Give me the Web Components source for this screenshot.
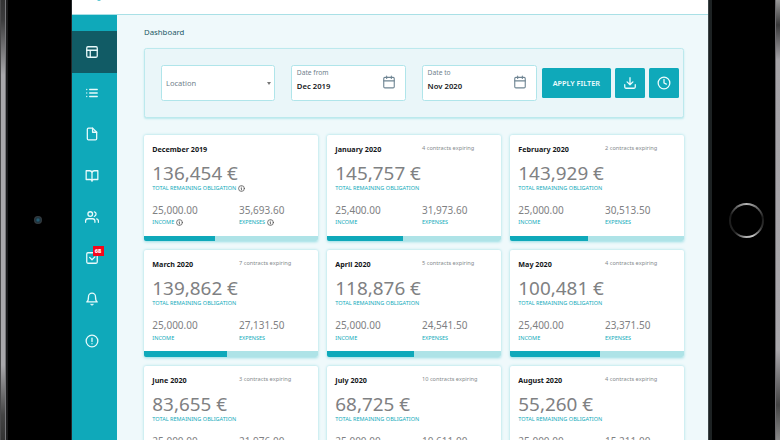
<!DOCTYPE html>
<html lang="en">
<head>
<meta charset="utf-8">
<title>Dashboard</title>
<style>
	body {
		margin: 0;
		width: 780px;
		height: 440px;
		overflow: hidden;
		background: #000;
		font-family: "Noto Sans", "Open Sans", sans-serif;
	}
</style>
</head>
<body>
<tablet-frame>
	<app-shell>
		<side-nav slot="nav"></side-nav>
		<filter-panel></filter-panel>
		<card-grid></card-grid>
	</app-shell>
</tablet-frame>

<script>
// stroke icons on a 24x24 grid
const ICONS = {
	layout: '<rect x="3" y="3" width="18" height="18" rx="2"/><path d="M3 9h18M9 21V9"/>',
	list: '<path d="M8 6h13M8 12h13M8 18h13M3 6h.01M3 12h.01M3 18h.01"/>',
	file: '<path d="M13 2H6a2 2 0 0 0-2 2v16a2 2 0 0 0 2 2h12a2 2 0 0 0 2-2V9z"/><path d="M13 2v7h7"/>',
	book: '<path d="M2 3h6a4 4 0 0 1 4 4v14a3 3 0 0 0-3-3H2zM22 3h-6a4 4 0 0 0-4 4v14a3 3 0 0 1 3-3h7z"/>',
	users: '<path d="M17 21v-2a4 4 0 0 0-4-4H5a4 4 0 0 0-4 4v2"/><circle cx="9" cy="7" r="4"/><path d="M23 21v-2a4 4 0 0 0-3-3.87M16 3.13a4 4 0 0 1 0 7.75"/>',
	check: '<path d="M8 11l4 4 5-5"/><rect x="3" y="3" width="18" height="18" rx="2"/>',
	bell: '<path d="M18 8A6 6 0 0 0 6 8c0 7-3 9-3 9h18s-3-2-3-9M13.73 21a2 2 0 0 1-3.46 0"/>',
	alert: '<circle cx="12" cy="12" r="10"/><path d="M12 7v6M12 16.5h.01"/>',
	calendar: '<rect x="3" y="4" width="18" height="18" rx="2"/><path d="M16 2v4M8 2v4M3 10h18"/>',
	download: '<path d="M21 15v4a2 2 0 0 1-2 2H5a2 2 0 0 1-2-2v-4M7 10l5 5 5-5M12 15V3"/>',
	clock: '<circle cx="12" cy="12" r="10"/><path d="M12 6v6l4 2"/>',
	info: '<circle cx="12" cy="12" r="10"/><path d="M12 17v-6h-1.5M12 7h.01"/>'
};

class LineIcon extends HTMLElement {
	constructor() {
		super();
		this.attachShadow({ mode: 'open' });
	}

	connectedCallback() {
		this.shadowRoot.innerHTML = `
		<style>
			:host { display: block; flex: none; width: var(--icon-size, 14px); height: var(--icon-size, 14px); }
			svg { display: block; width: 100%; height: 100%; fill: none; stroke: currentColor;
				stroke-width: var(--icon-stroke, 2.2); stroke-linecap: round; stroke-linejoin: round; }
		</style>
		<svg viewBox="0 0 24 24">${ICONS[this.getAttribute('name')]}</svg>`;
	}
}

class TabletFrame extends HTMLElement {
	constructor() {
		super();
		const shadowRoot = this.attachShadow({ mode: 'open' });
		shadowRoot.innerHTML = `
		<style>
			:host { display: grid; grid-template-columns: 72px 636px 72px; height: 440px; background: #000; }
			.bezel { display: flex; align-items: center; background: #000; }
			.left { box-sizing: border-box; border-right: 1px solid #24282a; }
			.right { box-sizing: border-box; border-left: 1px solid #3c4547; box-shadow: inset 3px 0 #1d2223; }
			.edge { height: 440px; flex: none; }
			.left .edge { width: 8px; background:
				linear-gradient(90deg, #4a4a4b 0 1px, transparent 1px 5px, #77777a 5px 6px, #1a1a1b 6px),
				linear-gradient(#333 0, #3c3c3d 20px, #a9a8ab 75px, #a9a8ab 365px, #444 415px, #333); }
			.right .edge { width: 5px; margin-left: auto; background:
				linear-gradient(90deg, #6c6a6e 0 1px, transparent 1px),
				linear-gradient(#999 0, #39393a 25px, #a5a3a7 60px, #a9a7ab 350px, #444 405px, #888); }
			.camera { width: 8px; height: 8px; margin-left: 26px; border-radius: 50%;
				background: radial-gradient(circle, #245d75 0 15%, #1e333d 40%, #3b3d40 75%); }
			.home { width: 35px; height: 35px; margin-left: 20px; margin-top: 1px; border-radius: 50%; padding: 2px; box-sizing: border-box;
				background: conic-gradient(#b5b5b5, #777 35deg, #1b1b1b 80deg, #333 115deg, #ccc 160deg, #aaa 185deg, #222 225deg, #1b1b1b 290deg, #777 330deg, #b5b5b5); }
			.home i { display: block; height: 100%; border-radius: 50%; background: #000; }
			.home, .camera { flex: none; }
		</style>
		<div class="bezel left"><div class="edge"></div><div class="camera"></div></div>
		<slot></slot>
		<div class="bezel right"><div class="home"><i></i></div><div class="edge"></div></div>`;
	}
}

class AppShell extends HTMLElement {
	constructor() {
		super();
		const shadowRoot = this.attachShadow({ mode: 'open' });
		shadowRoot.innerHTML = `
		<style>
			:host { display: grid; grid-template: 15px 425px / 45px 591px; overflow: hidden; background: #eff9fb; }
			header { grid-column: 1 / 3; background: #fff; border-bottom: 1px solid #a9e0e6; overflow: hidden; }
			/* foot of the logo, scrolled out of view */
			header svg { display: block; margin-left: 25px; width: 4px; height: 1px; }
			main { box-sizing: border-box; padding: 10px 24.5px 0 27px; overflow: hidden; }
			h1 { margin: 0; height: 14px; line-height: 14px; font-size: 7.8px; font-weight: 400; color: #1d5a65; }
			::slotted(filter-panel) { margin-top: 9px; }
			::slotted(card-grid) { margin-top: 16.5px; }
		</style>
		<header><svg viewBox="0 0 4 1"><path d="M0 0q2 2 4 0" fill="#4fc3cf"/></svg></header>
		<slot name="nav"></slot>
		<main><h1>Dashboard</h1><slot></slot></main>`;
	}
}

class SideNav extends HTMLElement {
	constructor() {
		super();
		const shadowRoot = this.attachShadow({ mode: 'open' });
		const names = ['layout', 'list', 'file', 'book', 'users', 'check', 'bell', 'alert'];
		shadowRoot.innerHTML = `
		<style>
			:host { display: block; box-sizing: border-box; padding-top: 16.3px; background: #0fa9ba; color: #e8fafb; }
			a { display: flex; align-items: center; box-sizing: border-box; height: 41.25px; padding-left: 13px; position: relative; }
			a.active { background: #115b65; }
			.badge { position: absolute; left: 20.5px; top: 8.5px; width: 11px; height: 10px; background: #f6061b; color: #fff;
				font-size: 5.7px; line-height: 10px; font-weight: 800; text-align: center; }
		</style>
		${names.map((name, i) => `<a class="${i ? '' : 'active'}"><line-icon name="${name}"></line-icon>${name === 'check' ? '<span class="badge">68</span>' : ''}</a>`).join('')}`;
	}
}

class FilterField extends HTMLElement {
	constructor() {
		super();
		this.attachShadow({ mode: 'open' });
	}

	connectedCallback() {
		const isSelect = this.hasAttribute('select');
		this.shadowRoot.innerHTML = `
		<style>
			:host { display: flex; align-items: center; justify-content: space-between; box-sizing: border-box; width: 114.5px; height: 36px;
				padding: 0 8.5px 0 4.5px; border: 1px solid #b0e5ea; border-radius: 2.5px; background: #fff; }
			:host([select]) { padding: 0 3px 0 4.5px; }
			label { display: block; font-size: 6.7px; line-height: 9px; color: #70818c; }
			:host([select]) label { font-size: 7.5px; }
			b { display: block; margin-top: 4px; font-size: 7.7px; line-height: 11px; font-weight: 600; color: #17191c; }
			.text { height: 31px; }
			:host([select]) .text { height: auto; }
			line-icon { --icon-size: 14px; --icon-stroke: 1.9; color: #6f8593; margin-top: -3px; }
			.caret { border: 2.3px solid transparent; border-top: 3px solid #777; border-bottom: 0; }
		</style>
		<div class="text"><label>${this.getAttribute('label')}</label>${isSelect ? '' : '<b><slot></slot></b>'}</div>
		${isSelect ? '<span class="caret"></span>' : '<line-icon name="calendar"></line-icon>'}`;
	}
}

class FilterPanel extends HTMLElement {
	constructor() {
		super();
		const shadowRoot = this.attachShadow({ mode: 'open' });
		shadowRoot.innerHTML = `
		<style>
			:host { display: flex; align-items: center; box-sizing: border-box; height: 70px; padding: 0 4px 0 15.5px;
				border: 1px solid #bce9ed; border-radius: 2.5px; background: #eaf6f9; box-shadow: 0 1px 2px #b9e8ec; }
			filter-field { margin-right: 16.3px; flex: none; }
			.last { margin-right: 5px; }
			.actions { display: flex; gap: 4.3px; }
			button { display: flex; align-items: center; justify-content: center; flex: none; width: 29.5px; height: 30px; padding: 0; border: 0;
				border-radius: 1.5px; background: #0fa9ba; color: #eefcfd; font: 600 7.3px "Noto Sans", "Open Sans", sans-serif; }
			.apply { width: 69.5px; }
		</style>
		<filter-field select label="Location"></filter-field>
		<filter-field label="Date from">Dec 2019</filter-field>
		<filter-field class="last" label="Date to">Nov 2020</filter-field>
		<div class="actions">
			<button class="apply">APPLY FILTER</button>
			<button><line-icon name="download"></line-icon></button>
			<button><line-icon name="clock"></line-icon></button>
		</div>`;
	}
}

class MonthCard extends HTMLElement {
	constructor() {
		super();
		this.attachShadow({ mode: 'open' });
	}

	/**
	 * @param {Object} data - month, expiring, total, income, expenses, percent
	 */
	set data(data) {
		const info = data.info ? '<line-icon name="info"></line-icon>' : '';
		this.shadowRoot.innerHTML = `
		<style>
			:host { display: flex; flex-direction: column; box-sizing: border-box; height: 106.5px; padding-top: 8px;
				border-radius: 2px; background: #fff; overflow: hidden; box-shadow: 0 0.5px 3px #98dde3; }
			.row { display: grid; grid-template-columns: 86.7px 1fr; padding-left: 8.3px; }
			.month { font-size: 7.2px; line-height: 12px; font-weight: 700; color: #15171a; }
			.expiring { font-size: 5.65px; line-height: 11px; color: #858a8d; }
			.total { margin-top: 6px; padding-left: 8.3px; font-size: 18.9px; line-height: 24px; color: #7f8183; }
			.label { display: flex; align-items: center; gap: 1.5px; height: 7px; font-size: 5.56px; line-height: 7px; color: #12abbb; white-space: nowrap; }
			.obligation { padding-left: 8.3px; }
			.amounts { margin-top: 11.4px; font-size: 10px; line-height: 14px; color: #7f8183; }
			.labels { margin-top: 2.6px; }
			line-icon { --icon-size: 7px; --icon-stroke: 2.7; color: #555; }
			.bar { margin-top: auto; height: 5.5px; background: #aee3e7; }
			.bar div { height: 100%; background: #0fa9ba; }
		</style>
		<div class="row"><span class="month">${data.month}</span><span class="expiring">${data.expiring ? data.expiring + ' contracts expiring' : ''}</span></div>
		<div class="total">${data.total} €</div>
		<div class="label obligation"><span>TOTAL REMAINING OBLIGATION</span>${info}</div>
		<div class="row amounts"><span>${data.income}</span><span>${data.expenses}</span></div>
		<div class="row labels"><span class="label"><span>INCOME</span>${info}</span><span class="label"><span>EXPENSES</span>${info}</span></div>
		<div class="bar"><div style="width: ${data.percent}%"></div></div>`;
	}
}

const MONTHS = [
	{ month: 'December 2019', total: '136,454', income: '25,000.00', expenses: '35,693.60', percent: 41, info: true },
	{ month: 'January 2020', expiring: 4, total: '145,757', income: '25,400.00', expenses: '31,973.60', percent: 44 },
	{ month: 'February 2020', expiring: 2, total: '143,929', income: '25,000.00', expenses: '30,513.50', percent: 44.8 },
	{ month: 'March 2020', expiring: 7, total: '139,862', income: '25,000.00', expenses: '27,131.50', percent: 47.7 },
	{ month: 'April 2020', expiring: 5, total: '118,876', income: '25,000.00', expenses: '24,541.50', percent: 50.2 },
	{ month: 'May 2020', expiring: 4, total: '100,481', income: '25,400.00', expenses: '23,371.50', percent: 51.9 },
	{ month: 'June 2020', expiring: 3, total: '83,655', income: '25,000.00', expenses: '21,976.00', percent: 54 },
	{ month: 'July 2020', expiring: 10, total: '68,725', income: '25,000.00', expenses: '10,611.00', percent: 60 },
	{ month: 'August 2020', expiring: 4, total: '55,260', income: '25,000.00', expenses: '15,211.00', percent: 64 }
];

class CardGrid extends HTMLElement {
	constructor() {
		super();
		const shadowRoot = this.attachShadow({ mode: 'open' });
		const style = document.createElement('style');
		style.innerHTML = `
			:host { display: grid; grid-template-columns: repeat(3, 1fr); gap: 9px 9.5px; }`;
		shadowRoot.appendChild(style);
		MONTHS.forEach((month) => {
			const card = document.createElement('month-card');
			card.data = month;
			shadowRoot.appendChild(card);
		});
	}
}

customElements.define('line-icon', LineIcon);
customElements.define('filter-field', FilterField);
customElements.define('month-card', MonthCard);
customElements.define('filter-panel', FilterPanel);
customElements.define('card-grid', CardGrid);
customElements.define('side-nav', SideNav);
customElements.define('app-shell', AppShell);
customElements.define('tablet-frame', TabletFrame);
</script>
</body>
</html>
